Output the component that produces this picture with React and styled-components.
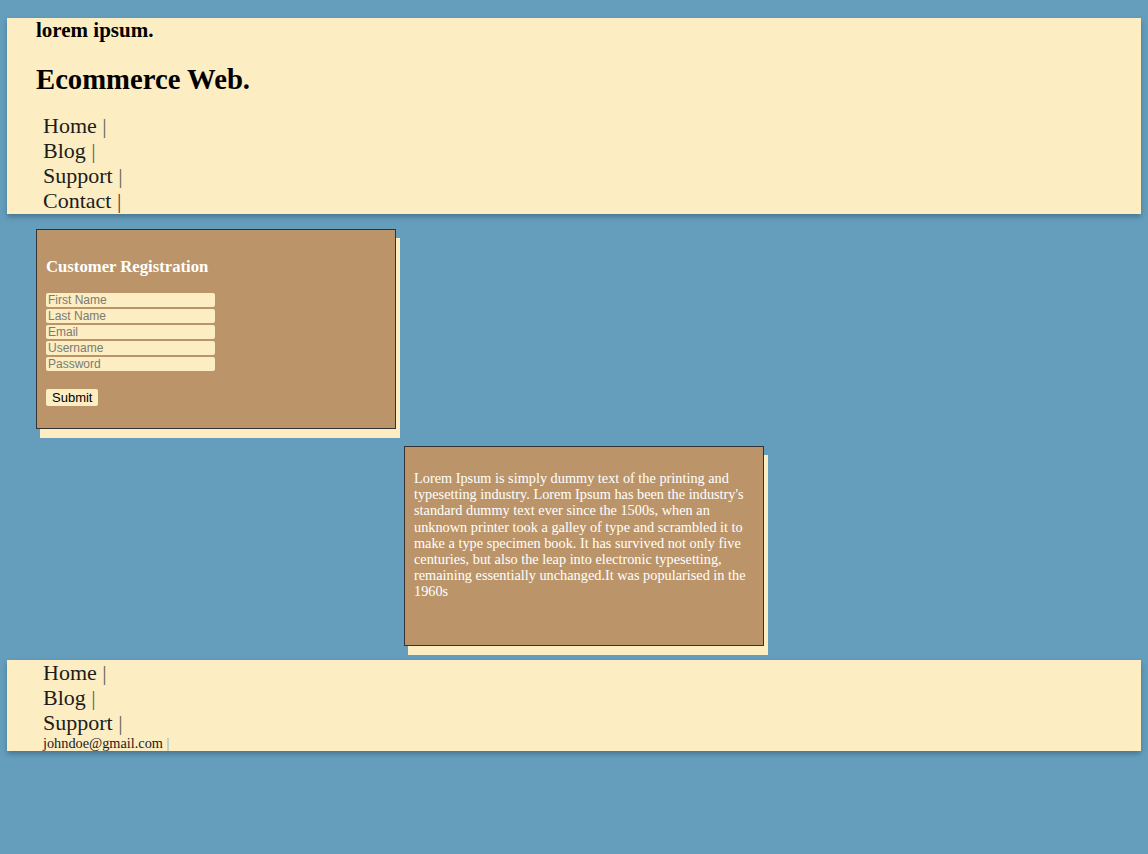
import React from "react";
import styled, { createGlobalStyle } from "styled-components";

const GlobalStyle = createGlobalStyle`
html, body {
  margin: 0;
  padding: 0;
  background: #659ebd;
  font-family: "Liberation Serif", "Times New Roman", serif;
}
body {
  padding: 18px 7px;
  min-height: 854px;
  box-sizing: border-box;
}
`

const Header = styled.header`
background: #fcedc2;
box-shadow: 0 3px 5px rgba(40, 70, 90, 0.45);
padding: 0 0 1px 29px;
`
const Tag = styled.div`
font-size: 21px;
font-weight: 700;
line-height: 24px;
color: #000;
`
const Title = styled.h1`
margin: 21px 0 18px;
font-size: 28.7px;
line-height: 32px;
font-weight: 700;
color: #000;
`
const NavList = styled.nav`
display: flex;
flex-direction: column;
padding-left: 7px;
`
const NavItem = styled.a`
font-size: ${props => props.small ? "14.3px" : "22px"};
line-height: ${props => props.small ? "16px" : "25px"};
color: #1c1c1c;
text-decoration: none;

&::after {
  content: " |";
  color: ${props => props.sep || "#5a6a58"};
  font-weight: 300;
}
`
const Main = styled.main`
display: grid;
grid-template-columns: 360px 360px;
grid-template-rows: auto auto;
column-gap: 8px;
row-gap: 17px;
padding: 15px 0 14px 29px;
`
const Card = styled.section`
box-sizing: border-box;
width: 360px;
height: 200px;
background: #bb9569;
border: 1px solid #333;
box-shadow: 4px 9px 0 #fcedc2;
padding: 9px;
color: #fff;
grid-column: ${props => props.col};
grid-row: ${props => props.row};
`
const CardTitle = styled.h3`
margin: 18px 0 17px;
font-size: 16.7px;
line-height: 19px;
font-weight: 700;
color: #fff;
`
const Form = styled.form`
display: flex;
flex-direction: column;
align-items: flex-start;
`
const Field = styled.input`
box-sizing: border-box;
width: 169px;
height: 14px;
margin: 0 0 2px;
padding: 0 2px;
border: none;
border-radius: 2px;
background: #fcedc2;
font-family: "Liberation Sans", Arial, sans-serif;
font-size: 12px;
line-height: 14px;
color: #222;
&::placeholder { color: #7d7a70; }
`
const Submit = styled.button`
margin-top: 16px;
height: 17px;
padding: 0 6px;
border: none;
border-radius: 2px;
background: #fcedc2;
font-family: "Liberation Sans", Arial, sans-serif;
font-size: 13px;
line-height: 17px;
color: #000;
`
const Text = styled.p`
margin: 14px 0 0;
font-size: 14.3px;
line-height: 16.2px;
color: #fff;
`
const Footer = styled.footer`
background: #fcedc2;
box-shadow: 0 3px 5px rgba(40, 70, 90, 0.45);
padding: 0 0 0 29px;
`

const fields = ["First Name", "Last Name", "Email", "Username", "Password"];

const App = () => {
  return (
    <>
      <GlobalStyle />
      <Header>
        <Tag>lorem ipsum.</Tag>
        <Title>Ecommerce Web.</Title>
        <NavList>
          <NavItem href="#">Home</NavItem>
          <NavItem href="#">Blog</NavItem>
          <NavItem href="#">Support</NavItem>
          <NavItem href="#" sep="#6a2a40">Contact</NavItem>
        </NavList>
      </Header>
      <Main>
        <Card col="1" row="1">
          <CardTitle>Customer Registration</CardTitle>
          <Form onSubmit={e => e.preventDefault()}>
            {fields.map(f => (
              <Field key={f} placeholder={f} type={f === "Password" ? "password" : "text"} />
            ))}
            <Submit type="submit">Submit</Submit>
          </Form>
        </Card>
        <Card col="2" row="2">
          <Text>
            Lorem Ipsum is simply dummy text of the printing and typesetting industry. Lorem Ipsum has been the industry's standard dummy text ever since the 1500s, when an unknown printer took a galley of type and scrambled it to make a type specimen book. It has survived not only five centuries, but also the leap into electronic typesetting, remaining essentially unchanged.It was popularised in the 1960s
          </Text>
        </Card>
      </Main>
      <Footer>
        <NavList>
          <NavItem href="#">Home</NavItem>
          <NavItem href="#">Blog</NavItem>
          <NavItem href="#">Support</NavItem>
          <NavItem href="#" small sep="#9a9a9a">johndoe@gmail.com</NavItem>
        </NavList>
      </Footer>
    </>
  );
};

export default App;
